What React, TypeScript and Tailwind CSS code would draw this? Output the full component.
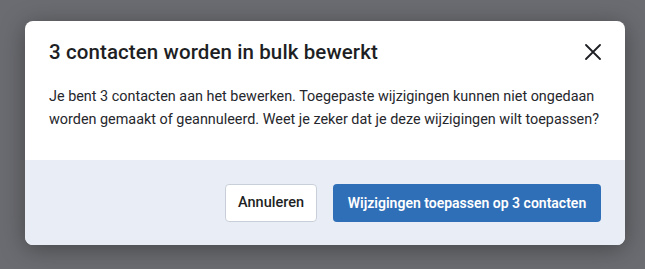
export default function App() {
  return (
    <div
      className="w-[645px] h-[269px] bg-[#6b6c71] flex flex-col pt-[21px] pl-[25px]"
      style={{ fontFamily: "Roboto, 'Liberation Sans', sans-serif" }}
    >
      <div className="w-[600px] h-[224px] bg-white rounded-[8px] overflow-hidden flex flex-col shadow-[0_4px_24px_rgba(0,0,0,0.35)]">
        <div className="flex flex-col px-6 pt-[17px] h-[139px]">
          <div className="flex items-center justify-between h-[28px]">
            <h2 className="text-[20.5px] leading-[28px] font-medium text-[#1e1f24] tracking-[0.1px]">
              3 contacten worden in bulk bewerkt
            </h2>
            <button className="w-[16px] h-[16px] flex items-center justify-center text-[#1e1f24] mr-0">
              <svg width="16" height="16" viewBox="0 0 16 16" fill="none">
                <path d="M1 1L15 15M15 1L1 15" stroke="currentColor" strokeWidth="1.8" strokeLinecap="round" />
              </svg>
            </button>
          </div>
          <p className="mt-[18.5px] text-[14.4px] leading-[23px] text-[#26272c] whitespace-nowrap">
            Je bent 3 contacten aan het bewerken. Toegepaste wijzigingen kunnen niet ongedaan
            <br />
            worden gemaakt of geannuleerd. Weet je zeker dat je deze wijzigingen wilt toepassen?
          </p>
        </div>
        <div className="flex-1 bg-[#e9eef6] flex items-start justify-end gap-4 px-6 pt-6">
          <button className="h-[38px] w-[92px] bg-white border border-[#c9cfd9] rounded-[4px] text-[14.5px] font-medium text-[#1e1f24]">
            Annuleren
          </button>
          <button className="h-[38px] w-[268px] bg-[#2f6fb7] rounded-[4px] text-[14px] font-semibold text-white">
            Wijzigingen toepassen op 3 contacten
          </button>
        </div>
      </div>
    </div>
  );
}
